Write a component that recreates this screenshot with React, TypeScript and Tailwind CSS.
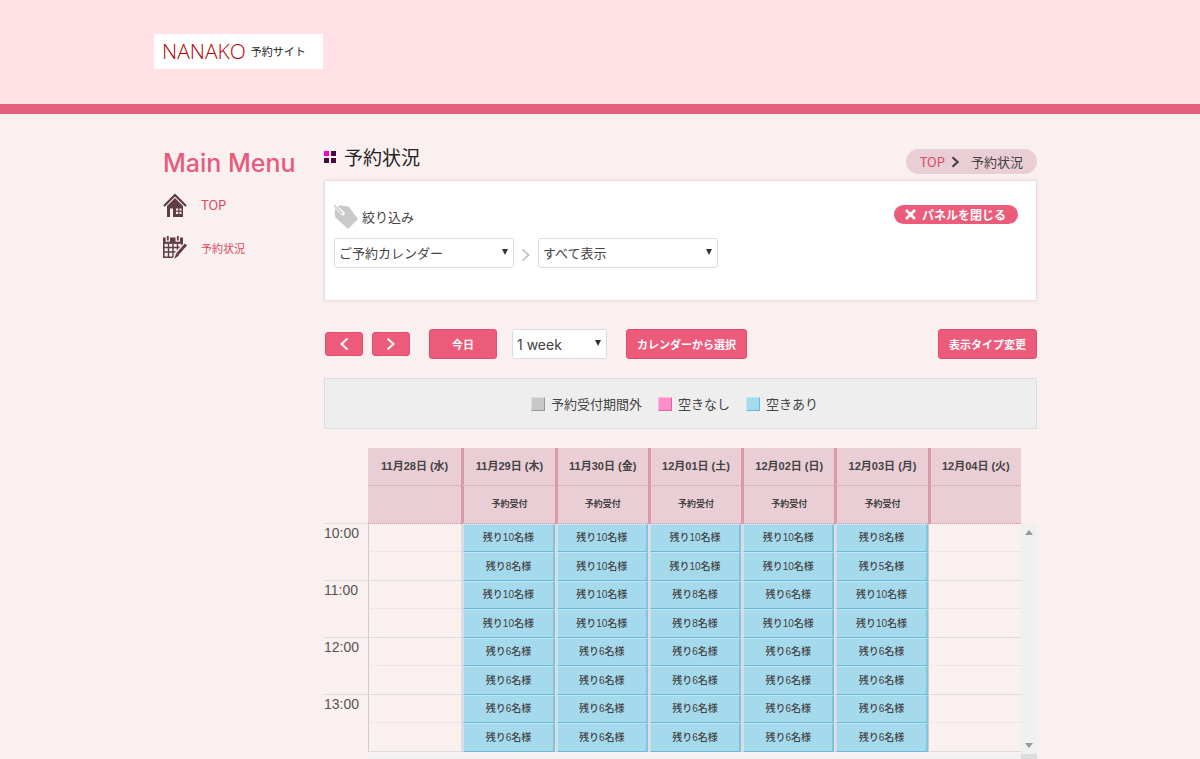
import React from 'react';

type Slot = { label: string } | null;

const days: { date: string; slots: number[] | null }[] = [
  { date: '11月28日 (水)', slots: null },
  { date: '11月29日 (木)', slots: [10, 8, 10, 10, 6, 6, 6, 6] },
  { date: '11月30日 (金)', slots: [10, 10, 10, 10, 6, 6, 6, 6] },
  { date: '12月01日 (土)', slots: [10, 10, 8, 8, 6, 6, 6, 6] },
  { date: '12月02日 (日)', slots: [10, 10, 6, 10, 6, 6, 6, 6] },
  { date: '12月03日 (月)', slots: [8, 5, 10, 10, 6, 6, 6, 6] },
  { date: '12月04日 (火)', slots: null },
];

const hours = ['10:00', '11:00', '12:00', '13:00'];

const jp = "font-['Noto_Sans_CJK_JP',sans-serif]";
const mixed = "font-['Liberation_Sans','Noto_Sans_CJK_JP',sans-serif]";

function HouseIcon() {
  return (
    <svg viewBox="0 0 24 24" className="size-6 text-[#5f3d42]" aria-hidden="true">
      <path d="M1 13 12 2l11 11" fill="none" stroke="currentColor" strokeWidth="2.2" />
      <path
        fill="currentColor"
        fillRule="evenodd"
        d="M12 5 20 13V24H10V15.500H7V24H4V13ZM13 15.500V21H18.500V15.500Z"
      />
      <path d="M15.800 15v6M13 18.200h6" stroke="currentColor" strokeWidth="1.2" />
    </svg>
  );
}

function CalendarPenIcon() {
  return (
    <svg viewBox="0 0 24 24" className="size-6 text-[#5f3d42]" fill="none" stroke="currentColor" aria-hidden="true">
      <path d="M0 4h2.600M7 4h5.500M17 4h3" strokeWidth="5" />
      <path d="M0 6.800h20" strokeWidth="2.200" />
      <path d="M4.800 0v4.500M14.800 0v4.500" strokeWidth="1.800" />
      <path d="M.8 2v19.200H10M19.200 2v9" strokeWidth="1.600" />
      <path d="M1 11.500h18M1 16h13M5.500 8v13M10 8v13M14.500 8v7" strokeWidth="1.400" />
      <path d="m21.500 10-9 9.500" stroke="#faf0ef" strokeWidth="5" />
      <path d="m23 8.500-8.500 9.500" strokeWidth="2.800" />
      <path d="m13.500 17 2.500 2.500-5 3.500Z" fill="currentColor" stroke="none" />
    </svg>
  );
}

function TagIcon() {
  return (
    <svg viewBox="0 0 24 24" className="size-6" aria-hidden="true">
      <path d="M1 4Q3 .5 7 .5L14.500 1.500 24 14 14 24 1.500 12.500Q0 8 1 4Z" fill="#c9c9c9" />
      <path d="M1 1l4.500 4.500" stroke="#fff" strokeWidth="3" />
      <path d="m5 4.500 4 4" stroke="#fff" strokeWidth="3.600" strokeLinecap="round" />
      <path d="M0 0l8.500 8.500" stroke="#c4c4c4" strokeWidth="1.400" />
    </svg>
  );
}

function Chevron({ className, left, weight = 2 }: { className: string; left?: boolean; weight?: number }) {
  return (
    <svg viewBox="0 0 10 14" className={className} fill="none" stroke="currentColor" strokeWidth={weight} aria-hidden="true">
      <path d={left ? 'M8.500 1.500 2.500 7l6 5.500' : 'M1.500 1.500 7.500 7l-6 5.500'} />
    </svg>
  );
}

function Select({ label, value, width, font }: { label: string; value: string; width: string; font: string }) {
  return (
    <div className={'relative ' + width}>
      <select
        aria-label={label}
        className={'block h-[30px] w-full appearance-none rounded-[3px] border border-[#dcdcdc] bg-white pl-1 pr-5 text-[#444] ' + font}
      >
        <option>{value}</option>
      </select>
      <svg viewBox="0 0 6 6" className="pointer-events-none absolute right-[6px] top-[11px] size-[6px]" aria-hidden="true">
        <path d="M0 0h6L3 6Z" fill="#333" />
      </svg>
    </div>
  );
}

const pinkButton =
  'flex items-center justify-center rounded-[3px] border border-[#e44f70] bg-[#ed5b7b] font-bold text-white';

function Legend({ swatch, text }: { swatch: string; text: string }) {
  return (
    <li className="flex items-center gap-[6px]">
      <span className={'size-[14px] border ' + swatch} />
      {text}
    </li>
  );
}

function SlotCell({ slot, lower }: { slot: Slot; lower: boolean }) {
  if (!slot) {
    return (
      <td
        className={
          'border-l border-l-[#ccc] p-0 ' +
          (lower ? 'border-b border-b-[#ddd]' : 'border-b border-dotted border-b-[#ddd] [border-left-style:solid]')
        }
      />
    );
  }
  return (
    <td className="bg-[#e4dcdc] p-0 pl-[2px]">
      <button
        className={
          'block w-full border border-b-[#69b9d8] border-l-[#bfe6f3] border-r-2 border-r-[#80c3dd] border-t-[#bfe6f3] bg-[#a5d9ec] text-center text-[10px] leading-none font-medium text-[#444] ' +
          mixed +
          (lower ? ' h-[29px]' : ' h-[28px]')
        }
      >
        {slot.label}
      </button>
    </td>
  );
}

function HeadCell({ text, size, divided }: { text: string; size: string; divided: boolean }) {
  return (
    <th
      className={
        'border-b border-dotted border-b-[#d69aa8] bg-[#e9ced5] p-0 leading-none text-[#444] ' +
        mixed +
        ' ' +
        size +
        (divided ? ' border-l-[3px] border-l-[#d69aa8] [border-left-style:solid]' : '')
      }
    >
      {text}
    </th>
  );
}

function Calendar() {
  return (
    <div className="flex">
      <div className="min-w-0 flex-1">
        <table className="w-full table-fixed border-separate border-spacing-0">
          <colgroup>
            <col className="w-[44px]" />
            {days.map((d) => (
              <col key={d.date} />
            ))}
          </colgroup>
          <thead>
            <tr className="h-[38px]">
              <td />
              {days.map((d, i) => (
                <HeadCell key={d.date} text={d.date} size="text-[11px]" divided={i > 0} />
              ))}
            </tr>
            <tr className="h-[38px]">
              <td className="border-b border-[#ddd]" />
              {days.map((d, i) => (
                <HeadCell key={d.date} text={d.slots ? '予約受付' : ''} size="text-[9px]" divided={i > 0} />
              ))}
            </tr>
          </thead>
          <tbody>
            {hours.map((h, r) => (
              <React.Fragment key={h}>
                <tr className="h-[28px]">
                  <th
                    rowSpan={2}
                    className={
                      "p-0 pt-px text-left align-top font-['Liberation_Sans',sans-serif] text-[14px] leading-4 font-normal text-[#555] " +
                      (r < 3 ? 'border-b border-[#ddd]' : '')
                    }
                  >
                    {h}
                  </th>
                  {days.map((d) => (
                    <SlotCell key={d.date} lower={false} slot={d.slots && { label: `残り${d.slots[r * 2]}名様` }} />
                  ))}
                </tr>
                <tr className="h-[29px]">
                  {days.map((d) => (
                    <SlotCell key={d.date} lower slot={d.slots && { label: `残り${d.slots[r * 2 + 1]}名様` }} />
                  ))}
                </tr>
              </React.Fragment>
            ))}
          </tbody>
        </table>
        <div className="mt-0.5 ml-[44px] h-[5px] bg-[#f0f0f0]" />
      </div>
      <div className="flex w-4 flex-col pt-[76px]">
        <div className="flex flex-1 flex-col items-center justify-between bg-[#f0f0f0] py-[6px]">
          <svg viewBox="0 0 8 5" className="h-[5px] w-2" aria-hidden="true">
            <path d="M0 5h8L4 0Z" fill="#999" />
          </svg>
          <svg viewBox="0 0 8 5" className="h-[5px] w-2" aria-hidden="true">
            <path d="M0 0h8L4 5Z" fill="#999" />
          </svg>
        </div>
        <div className="h-[5px] bg-[#dcdcdc]" />
      </div>
    </div>
  );
}

export default function App() {
  return (
    <div className={'min-h-screen bg-[#faf0ef] text-[#444] ' + jp}>
      <header className="border-b-[10px] border-[#e4607f] bg-[#ffe1e6] pt-[34px] pb-[35px]">
        <div className="mx-auto max-w-[892px]">
          <a href="#" className="inline-flex h-[35px] w-[169px] items-center gap-[5px] bg-white pl-2 align-top">
            <span className="font-['Open_Sans',sans-serif] text-[21px] leading-none font-light text-[#b80000]">NANAKO</span>
            <span className="text-[11px] leading-none text-[#222]">予約サイト</span>
          </a>
        </div>
      </header>

      <div className="mx-auto flex max-w-[892px] px-[9px]">
        <aside className="w-[161px] shrink-0 pt-[33px]">
          <h2 className="font-['Inter',sans-serif] text-[25px] leading-[32px] font-medium text-[#e65c7e]">Main Menu</h2>
          <nav className="mt-[14px] flex flex-col gap-[19px] text-[11px] leading-6 text-[#dc4a60]">
            <a href="#" className="flex items-center gap-[14px]">
              <HouseIcon />
              <span className="text-[13px]">TOP</span>
            </a>
            <a href="#" className="flex items-center gap-[14px]">
              <CalendarPenIcon />
              予約状況
            </a>
          </nav>
        </aside>

        <main className="min-w-0 flex-1">
          <div className="flex h-[66px] items-start justify-between">
            <h1 className="mt-[29px] flex h-[28px] items-center gap-2 text-[19px] leading-7 text-[#222]">
              <span className="grid grid-cols-2 gap-0.5">
                <i className="size-[5px] bg-[#ff00c8]" />
                <i className="size-[5px] bg-[#480a3c]" />
                <i className="size-[5px] bg-[#480a3c]" />
                <i className="size-[5px] bg-[#480a3c]" />
              </span>
              予約状況
            </h1>
            <nav className="mt-[35px] flex h-[25px] items-center rounded-full bg-[#e9ced5] px-[14px] text-[13px]">
              <a href="#" className="text-[#dc4a60]">TOP</a>
              <Chevron className="ml-[6px] h-3 w-[9px] text-[#444]" weight={2.6} />
              <span className="ml-[11px]">予約状況</span>
            </nav>
          </div>

          <section className="flex h-[121px] items-start justify-between rounded-[2px] border border-[#ecdcdd] bg-white pt-6 pr-[18px] pl-[9px] shadow-[0_0_2px_#e6d4d6]">
            <div>
              <h2 className="flex h-6 items-center gap-1 text-[13px]">
                <TagIcon />
                絞り込み
              </h2>
              <div className="mt-[9px] flex items-center">
                <Select label="カレンダー" value="ご予約カレンダー" width="w-[180px]" font="text-[13px]" />
                <Chevron className="mx-[7px] mt-1 h-[14px] w-[10px] text-[#bbb]" weight={1.6} />
                <Select label="表示" value="すべて表示" width="w-[180px]" font="text-[13px]" />
              </div>
            </div>
            <button className="flex h-[19px] w-[124px] items-center gap-[6px] rounded-full bg-[#ed5b7b] pl-[11px] text-[12px] leading-none font-bold text-white">
              <svg viewBox="0 0 11 11" className="size-[11px]" stroke="currentColor" strokeWidth="2.800" aria-hidden="true">
                <path d="m1 1 9 9M10 1 1 10" />
              </svg>
              パネルを閉じる
            </button>
          </section>

          <div className="mt-[28px] flex h-[30px] items-center pl-px text-[11px]">
            <button aria-label="前へ" className={pinkButton + ' h-6 w-[38px]'}>
              <Chevron left className="h-[14px] w-[10px]" />
            </button>
            <button aria-label="次へ" className={pinkButton + ' ml-[9px] h-6 w-[38px]'}>
              <Chevron className="h-[14px] w-[10px]" />
            </button>
            <button className={pinkButton + ' ml-[19px] h-[30px] w-[68px]'}>今日</button>
            <div className="ml-[15px]">
              <Select label="期間" value="1 week" width="w-[95px]" font="font-['Inter',sans-serif] text-[14px]" />
            </div>
            <button className={pinkButton + ' ml-[19px] h-[30px] w-[121px]'}>カレンダーから選択</button>
            <button className={pinkButton + ' ml-auto h-[30px] w-[99px]'}>表示タイプ変更</button>
          </div>

          <ul className="mt-[19px] mb-[19px] flex h-[51px] items-center justify-center gap-4 border border-[#ddd] bg-[#eee] pr-3 text-[13px]">
            <Legend swatch="border-[#ddd] border-r-[#999] border-b-[#999] bg-[#c8c8c8]" text="予約受付期間外" />
            <Legend swatch="border-[#ffb8da] border-r-[#dc66a4] border-b-[#dc66a4] bg-[#fb8fc7]" text="空きなし" />
            <Legend swatch="border-[#bfe6f3] border-r-[#69b9d8] border-b-[#69b9d8] bg-[#a5d9ec]" text="空きあり" />
          </ul>

          <Calendar />
        </main>
      </div>
    </div>
  );
}
